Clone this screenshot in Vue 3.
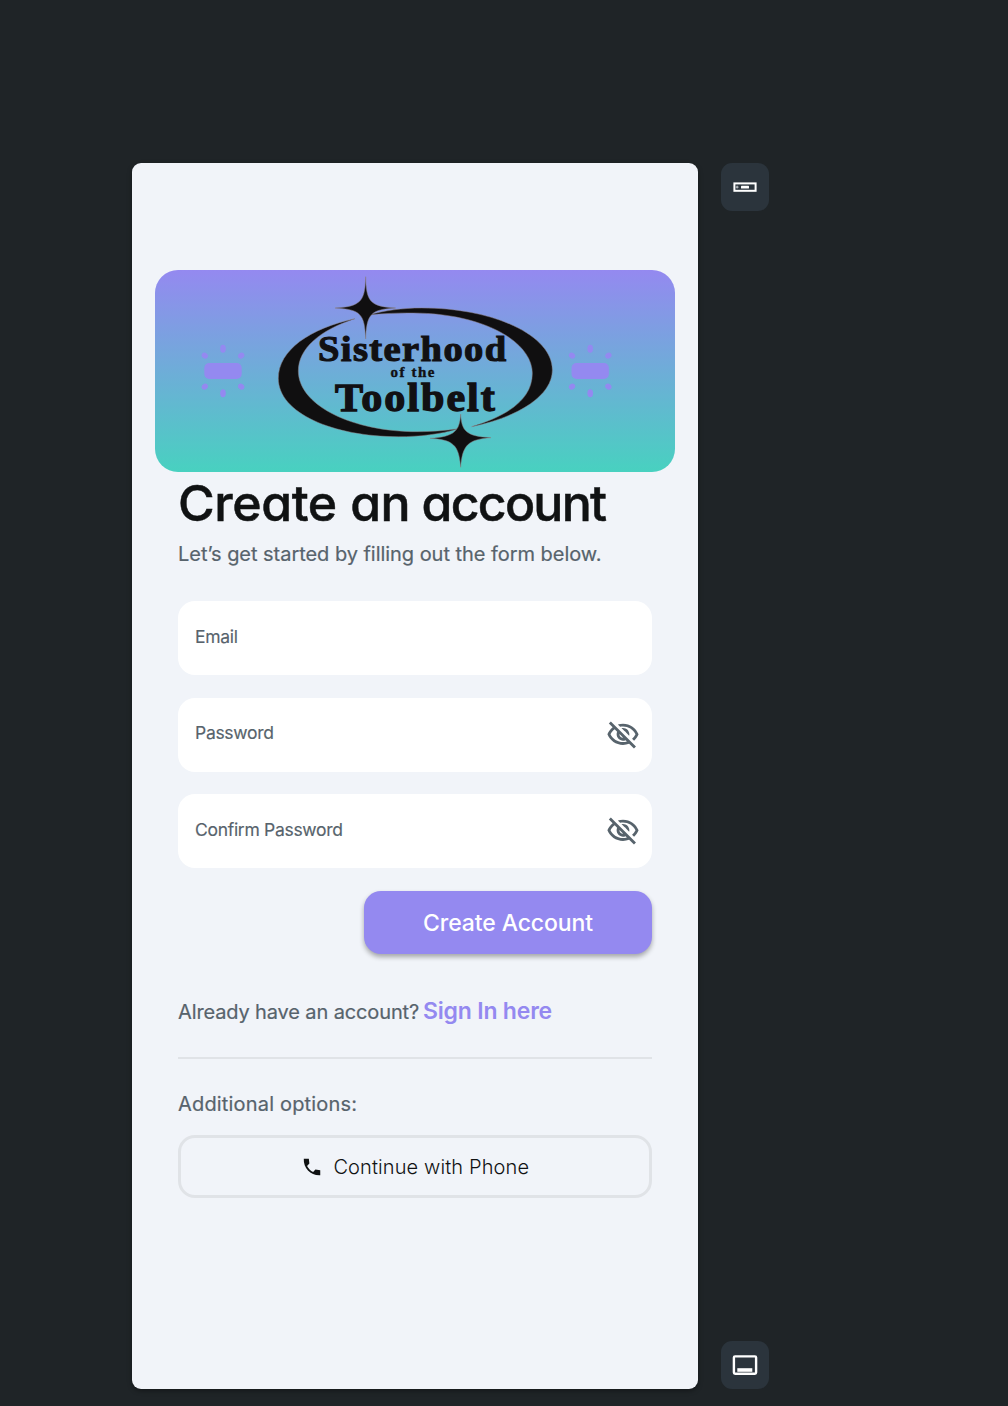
<script setup>
const fields = [
  { label: 'Email', secret: false },
  { label: 'Password', secret: true },
  { label: 'Confirm Password', secret: true },
]
const rays = [
  [0, -22.3, 0],
  [18.2, -15.4, 50],
  [18.2, 15.6, -50],
  [0, 22.3, 0],
  [-18.2, 15.6, 50],
  [-18.2, -15.4, -50],
]
</script>

<template>
  <div class="canvas">
    <main class="phone">
      <section class="banner">
        <svg width="520" height="202" viewBox="0 0 520 202">
          <g v-for="cx in [68, 435.2]" :key="cx" :transform="`translate(${cx} 101)`" fill="#9489f0">
            <rect x="-18.7" y="-8" width="37.4" height="16" rx="5" />
            <ellipse
              v-for="(r, i) in rays"
              :key="i"
              rx="2.8"
              :ry="i % 3 === 0 ? 4 : 3.3"
              :transform="`translate(${r[0]} ${r[1]}) rotate(${r[2]})`"
            />
          </g>
          <g transform="translate(115 -5) scale(.33333)" fill="#100f10" stroke="#8b7f83" stroke-width="1.5">
            <path d="M255 161C120 190 25 255 25 340C25 445 190 515 385 515C450 515 510 508 565 491C520 498 470 501 425 500C230 495 85 415 85 318C85 250 150 195 255 161Z" />
            <path d="M300 149C340 137 400 129 455 129C670 129 847 210 847 315C847 390 750 455 605 485C720 450 787 400 787 325C787 230 640 145 430 144C385 143 340 146 300 149Z" />
            <path d="M287 35C289 105 296 125 377 129C302 133 290 147 287 222C284 147 272 133 195 129C276 125 285 105 287 35Z" />
            <path d="M572 447C575 497 586 514 663 518C594 523 577 540 572 607C567 540 550 524 480 520C555 515 569 497 572 447Z" />
          </g>
          <g class="logo-text">
            <text transform="translate(163 91) scale(1.1 1)" font-size="35" textLength="171" stroke-width="1.1">Sisterhood</text>
            <text transform="translate(235.5 107)" font-size="15" textLength="44" stroke-width=".4">of the</text>
            <text transform="translate(180 141) scale(1.08 1)" font-size="39" textLength="148" stroke-width="1.3">Toolbelt</text>
          </g>
        </svg>
      </section>
      <div class="form">
        <h1><span class="w1">Create</span> <span class="w2">an</span> <span class="w3">account</span></h1>
        <p class="sub">Let’s get started by filling out the form below.</p>
        <div class="fields">
          <div v-for="f in fields" :key="f.label" class="field">
            <span class="label">{{ f.label }}</span>
            <svg v-if="f.secret" width="34" height="34" viewBox="0 0 24 24" fill="#57636c">
              <path d="M12 6c3.79 0 7.17 2.13 8.82 5.5-.59 1.22-1.42 2.27-2.41 3.12l1.41 1.41c1.39-1.23 2.49-2.77 3.18-4.53C21.27 7.11 17 4 12 4c-1.27 0-2.49.2-3.64.57l1.65 1.65C10.66 6.09 11.32 6 12 6zm-1.07 1.14L13 9.21c.57.25 1.03.71 1.28 1.28l2.07 2.07c.08-.34.14-.7.14-1.07C16.5 9.01 14.48 7 12 7c-.37 0-.72.05-1.07.14zM2.01 3.87l2.68 2.68C3.06 7.83 1.77 9.53 1 11.5 2.73 15.89 7 19 12 19c1.52 0 2.98-.29 4.32-.82l3.42 3.42 1.41-1.41L3.42 2.45 2.01 3.87zm7.5 7.5l2.61 2.61c-.04.01-.08.02-.12.02-1.38 0-2.5-1.12-2.5-2.5 0-.05.01-.08.01-.13zm-3.4-3.4l1.75 1.75c-.23.55-.36 1.15-.36 1.78 0 2.48 2.02 4.5 4.5 4.5.63 0 1.23-.13 1.77-.36l.98.98c-.88.24-1.8.38-2.75.38-3.79 0-7.17-2.13-8.82-5.5.7-1.43 1.72-2.61 2.93-3.53z" />
            </svg>
          </div>
        </div>
        <button class="primary"><span>Create Account</span></button>
        <p class="signin"><span class="already">Already have an account?</span><a>Sign In here</a></p>
        <hr />
        <p class="more">Additional options:</p>
        <button class="outline">
          <svg width="22" height="22" viewBox="0 0 24 24" fill="#101213">
            <path d="M21 15.46l-5.27-.61-2.52 2.52c-2.83-1.44-5.15-3.75-6.59-6.59l2.53-2.53L8.54 3H3.03C2.45 13.18 10.82 21.55 21 20.97v-5.51z" />
          </svg>
          <span>Continue with Phone</span>
        </button>
      </div>
    </main>
    <aside class="tools">
      <button class="tool">
        <svg width="24" height="10" viewBox="0 0 24 10">
          <rect x="1.4" y="1.4" width="21.2" height="7.4" fill="none" stroke="#fff" stroke-width="2" />
          <rect x="8" y="3.8" width="8" height="2.7" rx=".6" fill="#fff" />
          <path d="M2.6 5.1h3M4.1 3.7v2.8" stroke="#c9cdd0" stroke-width="1" />
        </svg>
      </button>
      <button class="tool">
        <svg width="26" height="20" viewBox="0 0 26 20">
          <rect x="1.9" y="1.4" width="22.2" height="17.4" rx="1.2" fill="none" stroke="#fff" stroke-width="2.4" />
          <rect x="5.3" y="13.2" width="15" height="3.6" fill="#fff" />
        </svg>
      </button>
    </aside>
  </div>
</template>

<style>
body {
  background: #1f2427;
}
</style>

<style scoped>
.canvas {
  box-sizing: border-box;
  display: flex;
  gap: 22.5px;
  width: 1008px;
  height: 1406px;
  padding: 163px 0 17px 132px;
  background: #1f2427;
  font-family: Inter, "Liberation Sans", sans-serif;
  color: #57636c;
  overflow: hidden;
}
.phone {
  box-sizing: border-box;
  width: 566px;
  height: 1226px;
  padding: 107px 23px 0;
  border-radius: 9px;
  background: #f1f4f9;
  box-shadow: 0 2px 5px rgba(0, 0, 0, 0.35);
}
.banner {
  height: 202px;
  border-radius: 23px;
  overflow: hidden;
  background: linear-gradient(180deg, #9489f0 0%, #48d1c0 100%);
}
.banner svg {
  display: block;
}
.logo-text {
  font-family: "Liberation Serif", serif;
  font-weight: 700;
  fill: #111013;
  stroke: #111013;
}
.form {
  display: flex;
  flex-direction: column;
  padding: 0 23px;
}
h1 {
  margin: 0;
  height: 63px;
  font-size: 50px;
  line-height: 63px;
  font-weight: 500;
  color: #101213;
  font-feature-settings: "cv11" 1;
  -webkit-text-stroke: 0.5px #101213;
  white-space: nowrap;
}
.w1 {
  letter-spacing: -0.4px;
}
.w2 {
  letter-spacing: -0.5px;
}
.w3 {
  margin-left: -2px;
  letter-spacing: -1.75px;
}
p {
  margin: 0;
  white-space: nowrap;
}
.sub {
  height: 26px;
  margin-top: 6px;
  font-size: 20px;
  line-height: 26px;
  letter-spacing: -0.04px;
  -webkit-text-stroke: 0.2px #57636c;
}
.fields {
  display: flex;
  flex-direction: column;
  gap: 22.7px;
  margin-top: 34px;
}
.field {
  box-sizing: border-box;
  display: flex;
  align-items: center;
  justify-content: space-between;
  height: 74px;
  padding: 0 12px 0 17px;
  border-radius: 17px;
  background: #fff;
}
.label {
  margin-bottom: 3px;
  font-size: 17.5px;
  line-height: 22px;
  letter-spacing: -0.3px;
  -webkit-text-stroke: 0.15px #57636c;
}
button {
  box-sizing: border-box;
  border: 0;
  padding: 0;
  font-family: inherit;
  white-space: nowrap;
}
.primary {
  align-self: flex-end;
  width: 288px;
  height: 63px;
  margin-top: 23px;
  border-radius: 17px;
  background: #9489f0;
  color: #fff;
  font-size: 23px;
  font-weight: 500;
  letter-spacing: -0.12px;
  box-shadow: 0 3px 5px rgba(0, 0, 0, 0.32);
}
.signin {
  display: flex;
  align-items: baseline;
  height: 30px;
  margin-top: 42px;
  line-height: 30px;
}
.already {
  width: 245px;
  font-size: 20px;
  letter-spacing: -0.13px;
  -webkit-text-stroke: 0.2px #57636c;
}
.signin a {
  font-size: 23px;
  font-weight: 600;
  color: #9489f0;
  letter-spacing: -0.2px;
}
hr {
  width: 100%;
  height: 2px;
  margin: 31px 0 0;
  border: 0;
  background: #e0e3e7;
}
.more {
  height: 26px;
  margin-top: 32px;
  font-size: 20px;
  line-height: 26px;
  letter-spacing: 0.18px;
  -webkit-text-stroke: 0.2px #57636c;
}
.outline {
  display: flex;
  align-items: center;
  justify-content: center;
  gap: 10.5px;
  height: 63.5px;
  margin-top: 17.5px;
  border: 3px solid #e0e3e7;
  border-radius: 17px;
  background: transparent;
  color: #101213;
  font-size: 20px;
  font-weight: 300;
  letter-spacing: 0.12px;
}
.tools {
  display: flex;
  flex-direction: column;
  justify-content: space-between;
}
.tool {
  display: flex;
  align-items: center;
  justify-content: center;
  width: 48px;
  height: 48px;
  border-radius: 11px;
  background: #2b343c;
}
</style>
